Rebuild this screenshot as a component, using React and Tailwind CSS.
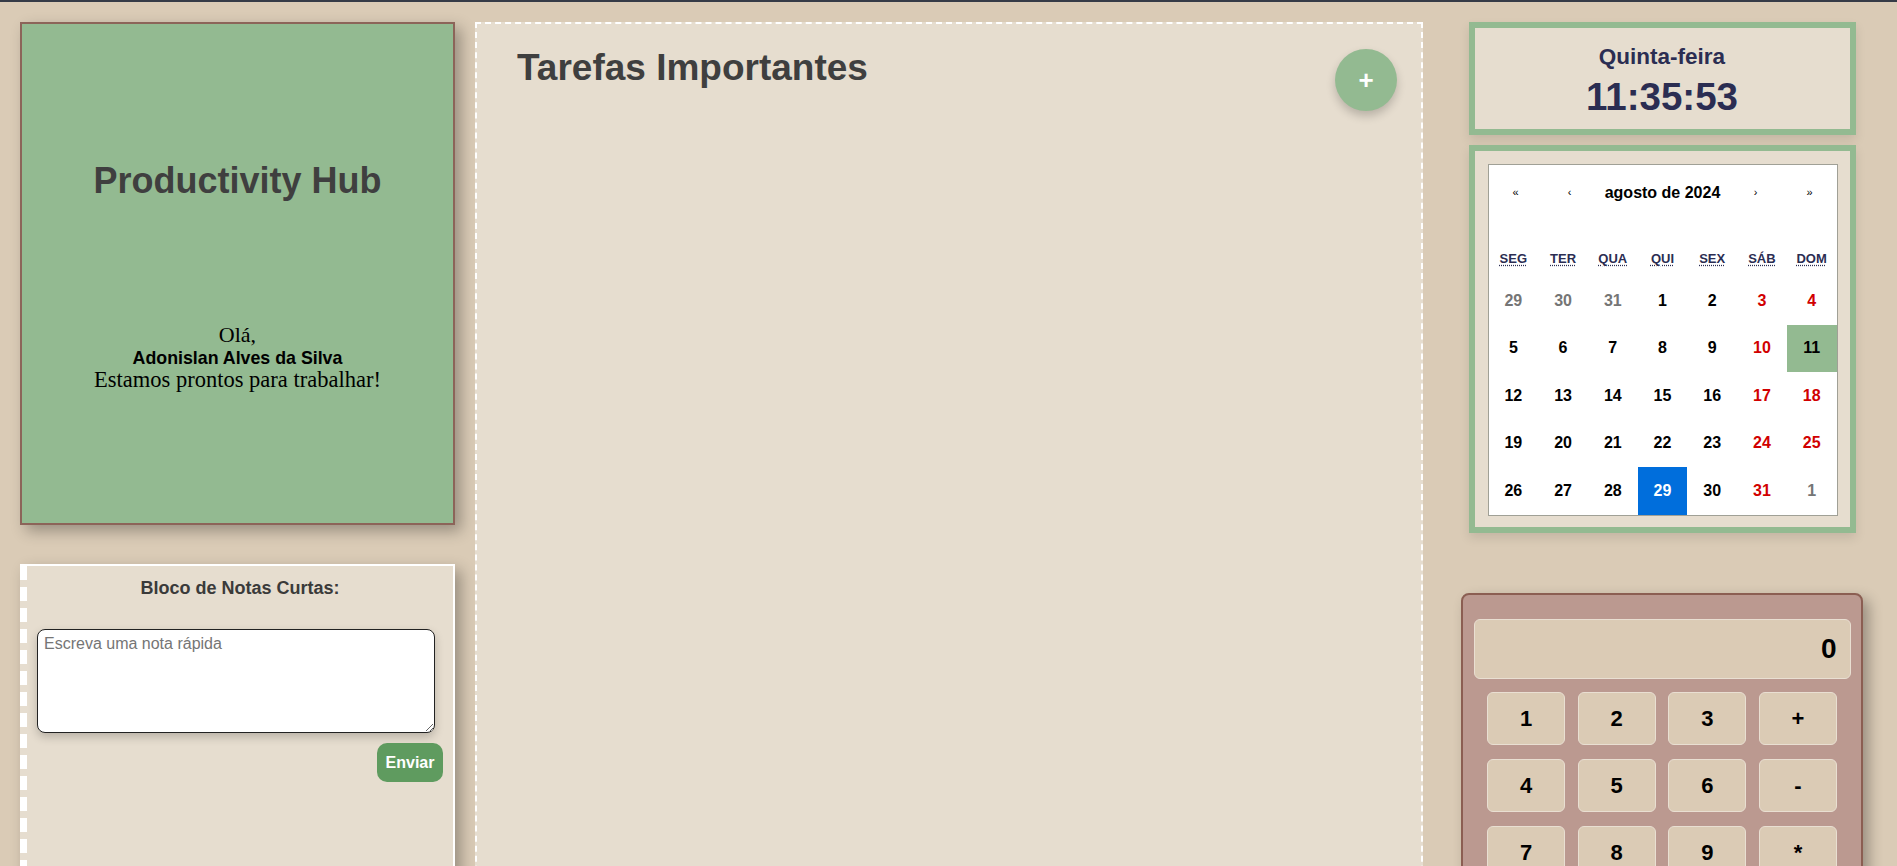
const days = [
  { d: 29, c: "text-[#757575]" },
  { d: 30, c: "text-[#757575]" },
  { d: 31, c: "text-[#757575]" },
  { d: 1 }, { d: 2 }, { d: 3, c: "text-[#d10000]" }, { d: 4, c: "text-[#d10000]" },
  { d: 5 }, { d: 6 }, { d: 7 }, { d: 8 }, { d: 9 }, { d: 10, c: "text-[#d10000]" }, { d: 11, bg: "bg-[#93ba91]" },
  { d: 12 }, { d: 13 }, { d: 14 }, { d: 15 }, { d: 16 }, { d: 17, c: "text-[#d10000]" }, { d: 18, c: "text-[#d10000]" },
  { d: 19 }, { d: 20 }, { d: 21 }, { d: 22 }, { d: 23 }, { d: 24, c: "text-[#d10000]" }, { d: 25, c: "text-[#d10000]" },
  { d: 26 }, { d: 27 }, { d: 28 }, { d: 29, bg: "bg-[#006edc]", c: "text-white" }, { d: 30 }, { d: 31, c: "text-[#d10000]" }, { d: 1, c: "text-[#757575]" },
];

const weekdays = [
  ["SEG", "segunda-feira"],
  ["TER", "terça-feira"],
  ["QUA", "quarta-feira"],
  ["QUI", "quinta-feira"],
  ["SEX", "sexta-feira"],
  ["SÁB", "sábado"],
  ["DOM", "domingo"],
];

const calcKeys = ["1", "2", "3", "+", "4", "5", "6", "-", "7", "8", "9", "*", "C", "0", "=", "/"];

export default function App() {
  return (
    <div className="h-[866px] overflow-hidden bg-[#dacbb6] font-['Liberation_Sans',Arial,sans-serif]">
      <div className="h-[2px] bg-[#353b47]" />
      <div className="flex items-start pl-[20px] pt-[20px]">
        {/* Left column */}
        <div className="flex w-[435px] shrink-0 flex-col">
          <div className="flex h-[503px] flex-col items-center border-2 border-[#8c6459] bg-[#93ba91] shadow-[6px_6px_14px_rgba(0,0,0,0.3)]">
            <h1 className="mt-[136px] text-[36px] font-bold leading-[42px] text-[#3f3f3f]">Productivity Hub</h1>
            <div className="mt-[122px] text-center text-black">
              <p className="font-['Liberation_Serif',serif] text-[22px] leading-[22.5px]">Olá,</p>
              <p className="text-[17.8px] font-bold leading-[22.5px]">Adonislan Alves da Silva</p>
              <p className="font-['Liberation_Serif',serif] text-[22.5px] leading-[22.5px]">Estamos prontos para trabalhar!</p>
            </div>
          </div>

          <div className="mt-[39px] flex h-[400px] border-t-2 border-r-2 border-white bg-[#e6ddcf] shadow-[6px_6px_14px_rgba(0,0,0,0.3)]">
            <div className="w-[7px] shrink-0 bg-[repeating-linear-gradient(to_bottom,#ffffff_0px,#ffffff_14px,transparent_14px,transparent_21px)]" />
            <div className="flex flex-1 flex-col">
              <h3 className="pt-[11px] text-center text-[18px] font-bold leading-[22px] text-[#3a3a3a]">Bloco de Notas Curtas:</h3>
              <textarea
                placeholder="Escreva uma nota rápida"
                className="mt-[30px] ml-[10px] h-[104px] w-[398px] rounded-[8px] border border-[#222222] bg-white px-[6px] py-[4px] text-[16px] leading-[20px] text-black shadow-[0_4px_10px_rgba(0,0,0,0.2)] outline-none placeholder:text-[#757575]"
              />
              <button className="mt-[10px] mr-[10px] h-[39px] w-[66px] self-end rounded-[10px] bg-[#5f9b5f] text-[16px] font-bold text-white">
                Enviar
              </button>
            </div>
          </div>
        </div>

        {/* Middle panel */}
        <div className="ml-[20px] flex h-[900px] w-[948px] shrink-0 items-start justify-between border-2 border-dashed border-white bg-[#e6ddcf]">
          <h2 className="mt-[23px] ml-[40px] text-[37px] font-bold leading-[42px] text-[#3f3f3f]">Tarefas Importantes</h2>
          <button className="mt-[25px] mr-[24px] flex h-[62px] w-[62px] items-center justify-center rounded-full bg-[#93ba91] text-[26px] font-bold leading-none text-white shadow-[0_5px_10px_rgba(0,0,0,0.2)]">
            +
          </button>
        </div>

        {/* Right column */}
        <div className="ml-[38px] flex w-[402px] shrink-0 flex-col items-center">
          <div className="h-[113px] w-[387px] border-[6px] border-[#93ba91] bg-[#e6ddcf] text-center text-[#2b2d52] shadow-[0_5px_10px_rgba(0,0,0,0.1)]">
            <div className="pt-[16px] text-[22.5px] font-bold leading-[26px]">Quinta-feira</div>
            <div className="mt-[6px] text-[38.5px] font-bold leading-[42px]">11:35:53</div>
          </div>

          <div className="mt-[10px] h-[388px] w-[387px] border-[6px] border-[#93ba91] bg-[#e6ddcf] pt-[13px] pl-[13px] shadow-[0_5px_10px_rgba(0,0,0,0.1)]">
            <div className="w-[350px] border border-[#a0a096] bg-white text-black">
              <div className="flex h-[55px] items-center">
                <span className="w-[54px] text-center text-[11px]">«</span>
                <span className="w-[54px] text-center text-[11px]">‹</span>
                <span className="flex-1 text-center text-[16px] font-bold">agosto de 2024</span>
                <span className="w-[54px] text-center text-[11px]">›</span>
                <span className="w-[54px] text-center text-[11px]">»</span>
              </div>
              <div className="mt-[20px] grid h-[37px] grid-cols-7 items-center text-center text-[13px] font-bold text-[#2b2d52]">
                {weekdays.map(([a, t]) => (
                  <abbr key={a} title={t} className="underline decoration-dotted underline-offset-[2px]">
                    {a}
                  </abbr>
                ))}
              </div>
              <div className="grid grid-cols-7">
                {days.map((x, i) => (
                  <div
                    key={i}
                    className={`flex h-[47.5px] items-center justify-center text-[16px] font-bold ${x.c || "text-black"} ${x.bg || ""}`}
                  >
                    {x.d}
                  </div>
                ))}
              </div>
            </div>
          </div>

          <div className="mt-[60px] flex h-[400px] w-[402px] flex-col items-center rounded-[8px] border-2 border-[#8b5e52] bg-[#bb9990] pt-[24px] shadow-[6px_6px_14px_rgba(0,0,0,0.3)]">
            <div className="flex h-[60px] w-[377px] items-center justify-end rounded-[6px] border border-[#e9dfd2] bg-[#dbcbb5] pr-[13px] text-[28px] font-bold text-black">
              0
            </div>
            <div className="mt-[13px] grid w-[350px] grid-cols-4 gap-x-[12.6px] gap-y-[14px]">
              {calcKeys.map((k) => (
                <button
                  key={k}
                  className="flex h-[53px] items-center justify-center rounded-[6px] border border-[#e9dfd2] bg-[#dbcbb5] text-[22px] font-bold text-black"
                >
                  {k}
                </button>
              ))}
            </div>
          </div>
        </div>
      </div>
    </div>
  );
}
